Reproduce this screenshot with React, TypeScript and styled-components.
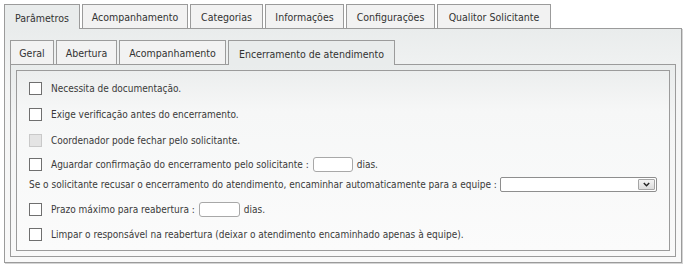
import React from 'react';
import styled, { createGlobalStyle } from 'styled-components';

const Global = createGlobalStyle`
  html, body { margin: 0; padding: 0; background: #ffffff; }
  body {
    padding: 4px;
    font-family: "DejaVu Sans Condensed", "DejaVu Sans", sans-serif;
    font-stretch: condensed;
    font-size: 10px;
    color: #3a3a3a;
  }
`;

const TabSet = styled.div<{ $inner?: boolean }>`
  display: flex;
  flex-direction: column;
  width: ${p => (p.$inner ? 'auto' : '678px')};
  flex: ${p => (p.$inner ? '1' : 'none')};
`;

const TabBar = styled.div`
  display: flex;
  align-items: flex-start;
  height: 24px;
  position: relative;
  z-index: 2;
`;

const Tab = styled.div<{ $active?: boolean; $w: number }>`
  box-sizing: border-box;
  width: ${p => p.$w}px;
  height: ${p => (p.$active ? 25 : 24)}px;
  border: 1px solid #9b9b9b;
  border-bottom: none;
  background: ${p => (p.$active ? '#e9ecec' : '#f2f2f2')};
  padding: 1px 0 0;
  margin-right: 2px;
  display: flex;
  align-items: center;
  justify-content: center;
  color: #333333;
  white-space: nowrap;
  font-size: 10.5px;
`;

const Panel = styled.div<{ $height: number; $pad: string }>`
  box-sizing: border-box;
  height: ${p => p.$height}px;
  border: 1px solid #9b9b9b;
  background: linear-gradient(to bottom, #e9ecec 0px, #f4f5f5 60px, #f9f9f9 100%);
  padding: ${p => p.$pad};
  display: flex;
  flex-direction: column;
  position: relative;
  z-index: 1;
`;

const OuterPanel = styled(Panel)`
  box-shadow: 1px 1px 0 #d4d4d4;
`;

const Content = styled.div`
  flex: 1;
  box-sizing: border-box;
  border: 1px solid #9b9b9b;
  background: linear-gradient(to bottom, #eceeee 0px, #f6f7f7 40px, #fbfbfb 100%);
  padding: 10px 12px 0;
  display: flex;
  flex-direction: column;
`;

const Row = styled.div<{ $mt: number }>`
  display: flex;
  align-items: center;
  height: 14px;
  margin-top: ${p => p.$mt}px;
  white-space: nowrap;
`;

const Check = styled.span<{ $disabled?: boolean }>`
  box-sizing: border-box;
  width: 13px;
  height: 13px;
  flex: none;
  border: 1px solid ${p => (p.$disabled ? '#c9c9c9' : '#6f6f6f')};
  background: ${p => (p.$disabled ? '#e4e4e4' : '#ffffff')};
  margin-right: 9px;
`;

const SmallInput = styled.span<{ $w: number }>`
  box-sizing: border-box;
  display: inline-block;
  width: ${p => p.$w}px;
  height: 15px;
  border: 1px solid #a8a8a8;
  border-radius: 3px;
  background: #ffffff;
  margin: 0 4px 0 4px;
`;

const Select = styled.span`
  box-sizing: border-box;
  display: flex;
  justify-content: flex-end;
  width: 159px;
  height: 15px;
  border: 1px solid #8e8e8e;
  border-radius: 2px;
  background: #ffffff;
  margin-left: 3px;
  padding: 1px;
`;

const SelectButton = styled.span`
  box-sizing: border-box;
  width: 17px;
  height: 11px;
  border: 1px solid #a5a5a5;
  border-radius: 1px;
  background: linear-gradient(to bottom, #f4f4f4, #dcdcdc);
  display: flex;
  align-items: center;
  justify-content: center;
`;

const Chevron = () => (
  <svg width="7" height="5" viewBox="0 0 7 5">
    <path d="M0.8 1 L3.5 3.8 L6.2 1" fill="none" stroke="#222" strokeWidth="1.4" />
  </svg>
);

const outerTabs: [string, number][] = [
  ['Parâmetros', 76],
  ['Acompanhamento', 106],
  ['Categorias', 73],
  ['Informações', 79],
  ['Configurações', 89],
  ['Qualitor Solicitante', 114],
];
const innerTabs: [string, number][] = [
  ['Geral', 44],
  ['Abertura', 61],
  ['Acompanhamento', 107],
  ['Encerramento de atendimento', 167],
];

export default function App() {
  return (
    <>
      <Global />
      <TabSet>
        <TabBar>
          {outerTabs.map(([t, w], i) => (
            <Tab key={t} $w={w} $active={i === 0}>{t}</Tab>
          ))}
        </TabBar>
        <OuterPanel $height={235} $pad="11px 5px 5px">
          <TabSet $inner>
            <TabBar>
              {innerTabs.map(([t, w], i) => (
                <Tab key={t} $w={w} $active={i === 3}>{t}</Tab>
              ))}
            </TabBar>
            <Panel $height={193} $pad="5px">
              <Content>
                <Row $mt={0}>
                  <Check />
                  Necessita de documentação.
                </Row>
                <Row $mt={12}>
                  <Check />
                  Exige verificação antes do encerramento.
                </Row>
                <Row $mt={12}>
                  <Check $disabled />
                  Coordenador pode fechar pelo solicitante.
                </Row>
                <Row $mt={10}>
                  <Check />
                  Aguardar confirmação do encerramento pelo solicitante :
                  <SmallInput $w={40} />
                  dias.
                </Row>
                <Row $mt={6}>
                  Se o solicitante recusar o encerramento do atendimento, encaminhar automaticamente para a equipe :
                  <Select>
                    <SelectButton>
                      <Chevron />
                    </SelectButton>
                  </Select>
                </Row>
                <Row $mt={11}>
                  <Check />
                  Prazo máximo para reabertura :
                  <SmallInput $w={41} />
                  dias.
                </Row>
                <Row $mt={11}>
                  <Check />
                  Limpar o responsável na reabertura (deixar o atendimento encaminhado apenas à equipe).
                </Row>
              </Content>
            </Panel>
          </TabSet>
        </OuterPanel>
      </TabSet>
    </>
  );
}
